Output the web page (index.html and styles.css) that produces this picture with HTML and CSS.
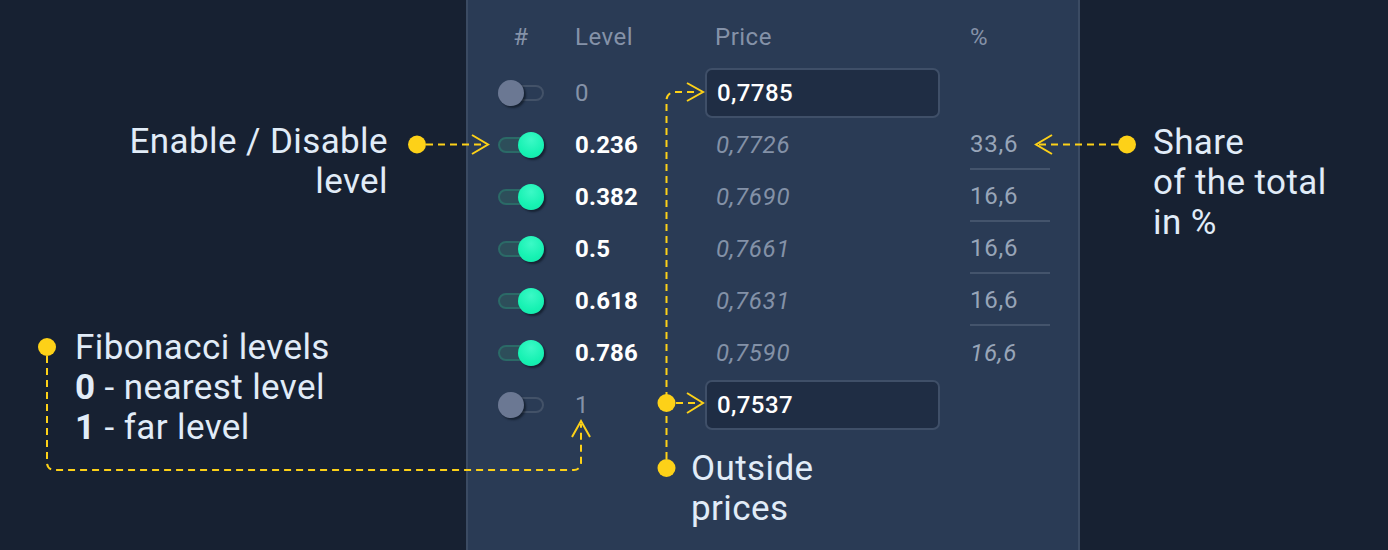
FILE: index.html
```html
<!DOCTYPE html>
<html lang="en">
<head>
<meta charset="utf-8">
<title>Fibonacci levels</title>
<link rel="stylesheet" href="styles.css">
</head>
<body>
<div class="stage">
  <section class="left">
    <p class="note note-enable">Enable / Disable<br>level</p>
    <p class="note note-fib">Fibonacci levels<br><b>0</b> - nearest level<br><b>1</b> - far level</p>
  </section>

  <section class="panel">
    <div class="row head">
      <span class="hash">#</span>
      <span>Level</span>
      <span class="head-price">Price</span>
      <span>%</span>
    </div>

    <div class="row">
      <span class="toggle"><span class="knob"></span></span>
      <span class="lvl off">0</span>
      <span class="input">0,7785</span>
      <span class="pct"></span>
    </div>
    <div class="row">
      <span class="toggle on"><span class="knob"></span></span>
      <span class="lvl">0.236</span>
      <span class="price">0,7726</span>
      <span class="pct sep">33,6</span>
    </div>
    <div class="row">
      <span class="toggle on"><span class="knob"></span></span>
      <span class="lvl">0.382</span>
      <span class="price">0,7690</span>
      <span class="pct sep">16,6</span>
    </div>
    <div class="row">
      <span class="toggle on"><span class="knob"></span></span>
      <span class="lvl">0.5</span>
      <span class="price">0,7661</span>
      <span class="pct sep">16,6</span>
    </div>
    <div class="row">
      <span class="toggle on"><span class="knob"></span></span>
      <span class="lvl">0.618</span>
      <span class="price">0,7631</span>
      <span class="pct sep">16,6</span>
    </div>
    <div class="row">
      <span class="toggle on"><span class="knob"></span></span>
      <span class="lvl">0.786</span>
      <span class="price">0,7590</span>
      <span class="pct italic">16,6</span>
    </div>
    <div class="row">
      <span class="toggle"><span class="knob"></span></span>
      <span class="lvl off">1</span>
      <span class="input">0,7537</span>
      <span class="pct"></span>
    </div>

    <p class="note note-outside">Outside<br>prices</p>
  </section>

  <section class="right">
    <p class="note">Share<br>of the total<br>in %</p>
  </section>

  <svg class="overlay" viewBox="0 0 1388 550" width="1388" height="550" aria-hidden="true">
    <g fill="none" stroke="#fdd118" stroke-width="2" stroke-dasharray="7 5">
      <path d="M426 144.5H485"/>
      <path d="M1118 144.5H1039"/>
      <path d="M47 356V463a7 7 0 0 0 7 7H574a7 7 0 0 0 7-7V424"/>
      <path d="M666.5 459V100a8 8 0 0 1 8-8H699"/>
      <path d="M676 403H699"/>
    </g>
    <g fill="none" stroke="#fdd118" stroke-width="2">
      <polyline points="472,135 488,144.5 472,154"/>
      <polyline points="1052,135 1036,144.5 1052,154"/>
      <polyline points="572,437 581,421 590,437"/>
      <polyline points="687,83 703,92 687,101"/>
      <polyline points="687,393 703,403 687,413"/>
    </g>
    <g fill="#fdd118">
      <circle cx="417" cy="144.5" r="9"/>
      <circle cx="1127" cy="144.5" r="9"/>
      <circle cx="47" cy="347" r="9"/>
      <circle cx="666.5" cy="403" r="9"/>
      <circle cx="666.5" cy="468" r="9"/>
    </g>
  </svg>
</div>
</body>
</html>
```
FILE: styles.css
```css
* { box-sizing: border-box; }

html, body {
  margin: 0;
  height: 100%;
}

body {
  background: #172132;
  font-family: Roboto, "Liberation Sans", sans-serif;
  overflow: hidden;
}

.stage {
  position: relative;
  width: 1388px;
  height: 550px;
  display: grid;
  grid-template-columns: 466px 614px 1fr;
}

.note {
  margin: 0;
  font-size: 35px;
  line-height: 40px;
  letter-spacing: 0.4px;
  color: #e1ecf8;
  font-weight: 400;
}

.note b { font-weight: 700; }

.left {
  display: flex;
  flex-direction: column;
  padding-top: 122px;
}

.note-enable {
  text-align: right;
  padding-right: 78px;
}

.note-fib {
  margin-top: 126px;
  padding-left: 75px;
}

.panel {
  background: #2a3b55;
  border-left: 2px solid #3b4b63;
  border-right: 2px solid #3b4b63;
  padding-left: 30px;
}

.row {
  display: grid;
  grid-template-columns: 77px 130px 265px 80px;
  height: 52px;
  align-items: center;
  font-size: 24px;
  letter-spacing: 0.4px;
}

.head {
  height: 67px;
  align-items: start;
  padding-top: 25px;
  font-size: 24px;
  line-height: 24px;
  letter-spacing: 0.5px;
  color: #8592a8;
}

.head .hash {
  width: 46px;
  text-align: center;
}

.head-price { padding-left: 10px; }

.toggle {
  display: flex;
  align-items: center;
  width: 46px;
  height: 16px;
  border: 2px solid #435268;
  border-radius: 8px;
  justify-content: flex-start;
}

.toggle .knob {
  flex: none;
  width: 26px;
  height: 26px;
  margin-left: -2px;
  border-radius: 50%;
  background: #6b7893;
  box-shadow: 2px 2px 2px rgba(8, 14, 24, 0.55);
}

.toggle.on {
  background: #2d4e5a;
  border-color: #2b6a67;
  justify-content: flex-end;
}

.toggle.on .knob {
  margin-left: 0;
  margin-right: -2px;
  background: radial-gradient(circle at 50% 30%, #3cf9c6 0%, #17f2b3 60%, #12e6a9 100%);
}

.lvl {
  color: #ffffff;
  font-weight: 700;
  letter-spacing: 0.2px;
}

.lvl.off {
  color: #8592a8;
  font-weight: 400;
}

.price {
  font-style: italic;
  color: #8391a7;
  padding-left: 11px;
  letter-spacing: 0.7px;
}

.input {
  display: flex;
  align-items: center;
  width: 235px;
  height: 50px;
  padding-left: 10px;
  border: 2px solid #3f4f68;
  border-radius: 7px;
  background: #1f2d44;
  color: #ffffff;
  font-weight: 500;
}

.pct {
  align-self: stretch;
  display: flex;
  align-items: center;
  color: #98a5b8;
  letter-spacing: 0.8px;
}

.pct.sep {
  border-bottom: 2px solid #44546c;
  margin-bottom: 1px;
}

.pct.italic { font-style: italic; }

.note-outside {
  margin: 18px 0 0 193px;
}

.right {
  padding-top: 123px;
  padding-left: 73px;
}

.overlay {
  position: absolute;
  left: 0;
  top: 0;
  pointer-events: none;
}
```
